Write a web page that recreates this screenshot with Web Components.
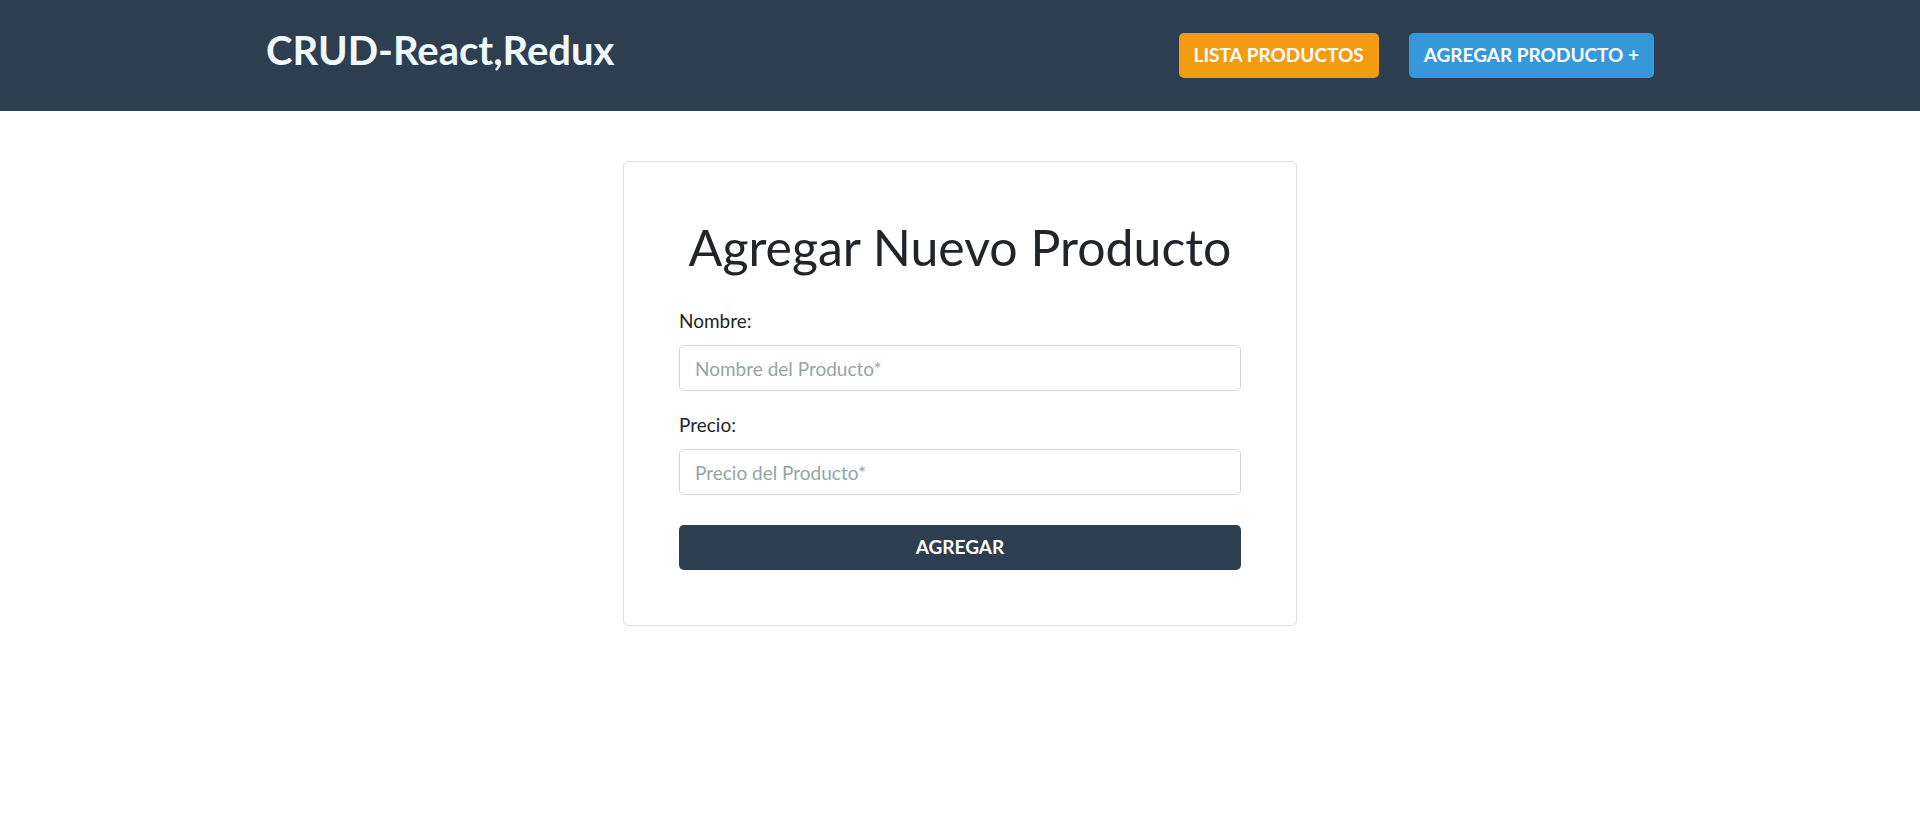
<!DOCTYPE html>
<html lang="es">
<head>
<meta charset="utf-8">
<meta name="viewport" content="width=device-width, initial-scale=1">
<title>CRUD-React,Redux</title>
<style>
body { margin: 0; background: #fff; color: #212529; font: 400 19px/28px Lato, sans-serif; }
</style>
</head>
<body>
<app-navbar></app-navbar>
<form-card heading="Agregar Nuevo Producto">
  <text-field label="Nombre:" placeholder="Nombre del Producto*" name="nombre"></text-field>
  <text-field label="Precio:" placeholder="Precio del Producto*" name="precio" type="number"></text-field>
  <app-button variant="primary">Agregar</app-button>
</form-card>
<script>
class AppNavbar extends HTMLElement {
  connectedCallback() {
    this.attachShadow({ mode: 'open' }).innerHTML = `
      <style>
        :host { display: block; background: #2c3e50; padding: 16px; }
        .container { box-sizing: border-box; max-width: 1420px; margin: 0 auto; padding: 0 16px; display: flex; flex-wrap: wrap; justify-content: space-between; }
        h1 { margin: 0 0 8px; font-size: 40px; line-height: 48px; font-weight: 700; padding-top: 10px; }
        h1 a { color: #f0f8ff; text-decoration: none; }
        nav { display: flex; flex-wrap: wrap; gap: 30px; padding: 17px 0; }
      </style>
      <div class="container">
        <h1><a href="#">CRUD-React,Redux</a></h1>
        <nav>
          <app-button variant="warning" href="#lista">Lista Productos</app-button>
          <app-button variant="info" href="#agregar">Agregar Producto +</app-button>
        </nav>
      </div>`;
  }
}
class AppButton extends HTMLElement {
  connectedCallback() {
    const href = this.getAttribute('href');
    const control = href ? `<a class="btn" href="${href}"><slot></slot></a>` : '<button class="btn" type="submit"><slot></slot></button>';
    this.attachShadow({ mode: 'open' }).innerHTML = `
      <style>
        :host { display: block; --fill: #2c3e50; }
        :host([variant="warning"]) { --fill: #f39c12; }
        :host([variant="info"]) { --fill: #3498db; }
        .btn { box-sizing: border-box; display: block; width: 100%; border: 0; border-radius: 5px; padding: 8px 15px 9px; background: var(--fill); color: #fff; font: inherit; font-weight: 700; line-height: 28px; text-align: center; text-transform: uppercase; text-decoration: none; cursor: pointer; }
      </style>${control}`;
  }
}
class TextField extends HTMLElement {
  connectedCallback() {
    this.attachShadow({ mode: 'open' }).innerHTML = `
      <style>
        :host { display: block; margin-bottom: 20px; }
        label { display: block; margin-bottom: 10px; }
        input { box-sizing: border-box; display: block; width: 100%; height: 46px; padding: 7px 15px; border: 1px solid #ced4da; border-radius: 5px; background: #fff; color: #7b8a8b; font: inherit; }
        input::placeholder { color: #95a5a6; opacity: 1; }
      </style>
      <label for="control">${this.getAttribute('label')}</label>
      <input id="control" type="${this.getAttribute('type') || 'text'}" name="${this.getAttribute('name')}" placeholder="${this.getAttribute('placeholder')}">`;
  }
}
class FormCard extends HTMLElement {
  connectedCallback() {
    this.attachShadow({ mode: 'open' }).innerHTML = `
      <style>
        :host { display: block; box-sizing: border-box; max-width: 706px; margin: 50px auto 0; padding: 0 16px; }
        form { box-sizing: border-box; border: 1px solid #dfdfdf; border-radius: 5px; padding: 55px; }
        h2 { margin: 0 0 30px; font-size: 50px; line-height: 60px; font-weight: 400; text-align: center; }
        ::slotted(app-button) { margin-top: 30px; }
      </style>
      <form>
        <h2>${this.getAttribute('heading')}</h2>
        <slot></slot>
      </form>`;
  }
}
customElements.define('app-button', AppButton);
customElements.define('app-navbar', AppNavbar);
customElements.define('text-field', TextField);
customElements.define('form-card', FormCard);
</script>
</body>
</html>
